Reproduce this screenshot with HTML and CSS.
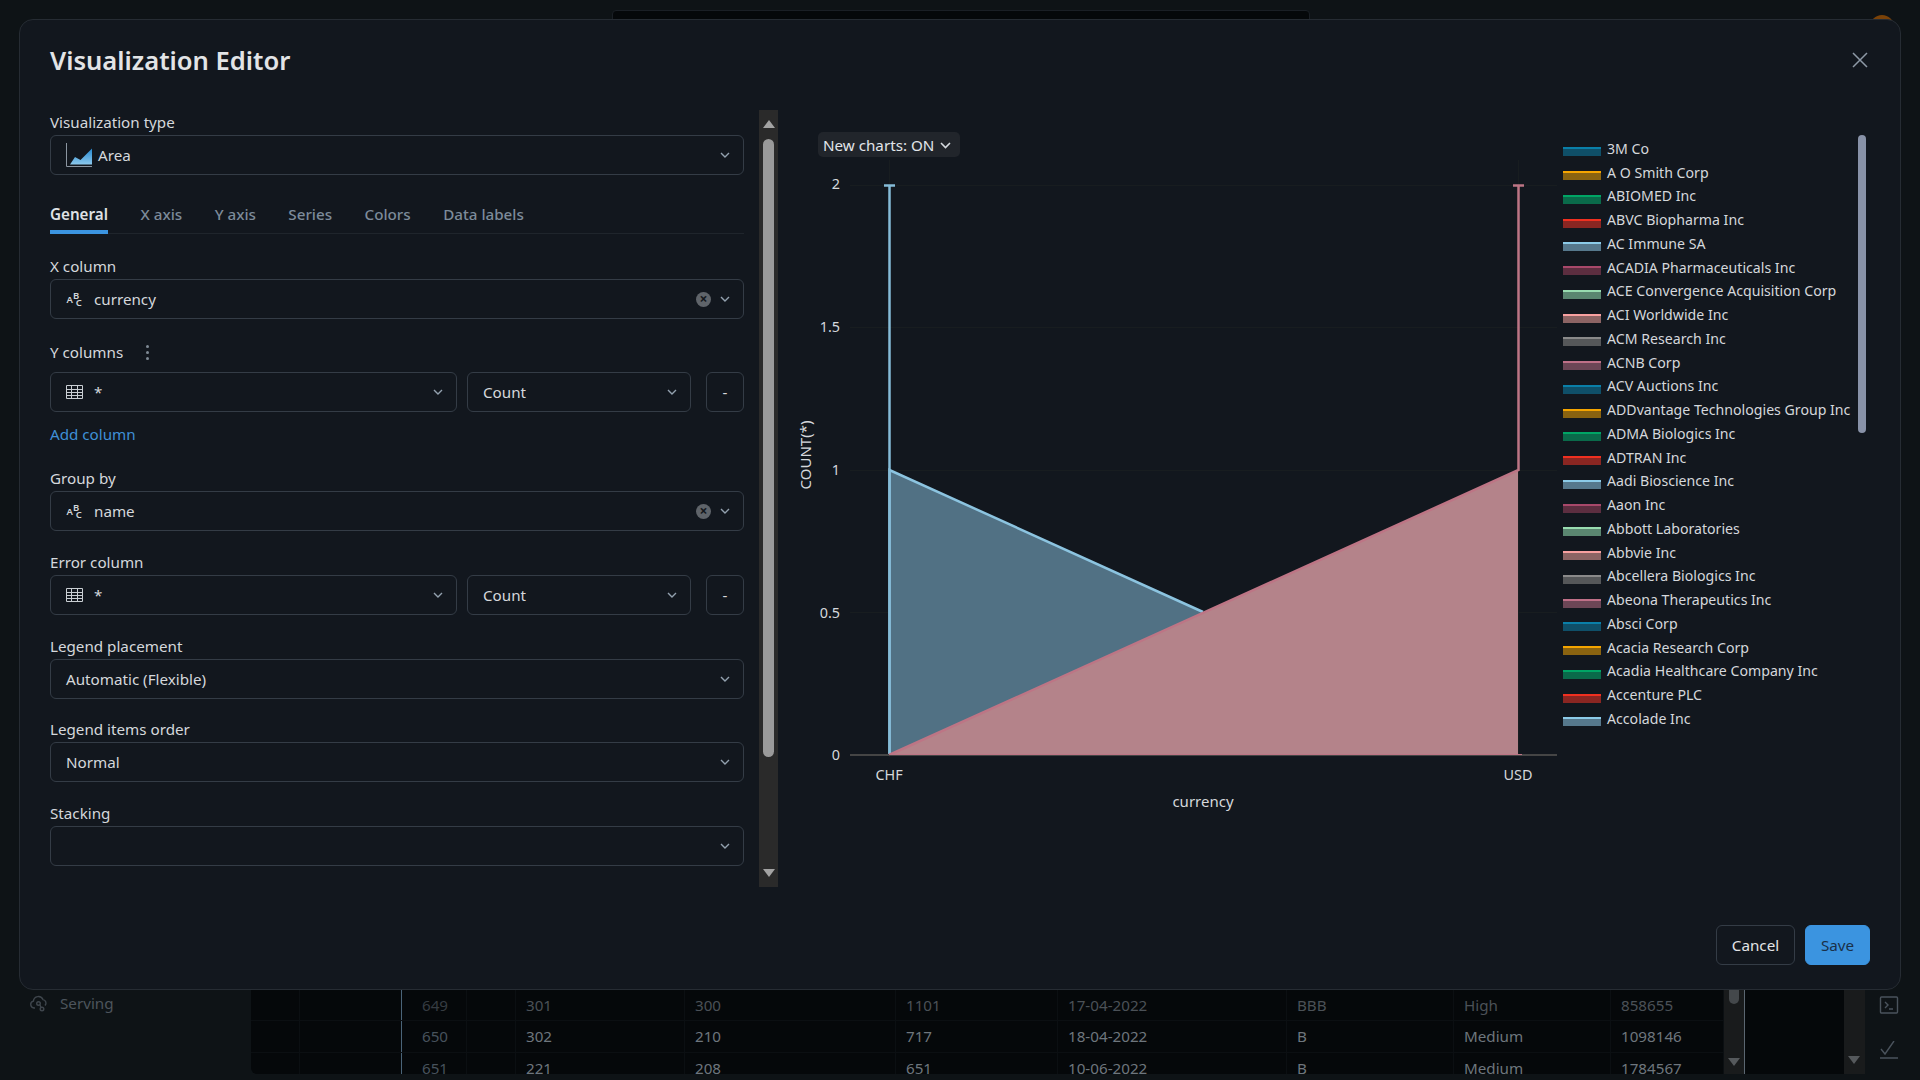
FILE: index.html
```html
<!DOCTYPE html>
<html>
<head>
<title>Visualization Editor</title>
<link rel="stylesheet" href="styles.css">
</head>
<body>

<div class="page">
  <div class="topbar">
    <div class="search-box"></div>
    <div class="avatar"></div>
  </div>
  <div class="main">
    <div class="sidebar">
      <div class="side-item">
        <svg class="side-icon" width="20" height="20" viewBox="0 0 20 20" fill="none" stroke="#3f464d" stroke-width="1.4">
          <path d="M6 15H5a3.5 3.5 0 0 1-.6-6.9A5 5 0 0 1 14 6.6a3.5 3.5 0 0 1 2 5.9"/>
          <circle cx="9.5" cy="10.5" r="1.8"/>
          <circle cx="13" cy="16" r="1.8"/>
          <path d="M11 12l1 2.4"/>
        </svg>
        <span>Serving</span>
      </div>
    </div>
    <div class="table-wrap">
      <div class="data-table">
        <div class="row row-dim">
          <div></div><div class="divided"></div><div class="idx">649</div><div></div><div>301</div><div>300</div><div>1101</div><div>17-04-2022</div><div>BBB</div><div>High</div><div>858655</div>
        </div>
        <div class="row">
          <div></div><div class="divided"></div><div class="idx">650</div><div></div><div>302</div><div>210</div><div>717</div><div>18-04-2022</div><div>B</div><div>Medium</div><div>1098146</div>
        </div>
        <div class="row">
          <div></div><div class="divided"></div><div class="idx">651</div><div></div><div>221</div><div>208</div><div>651</div><div>10-06-2022</div><div>B</div><div>Medium</div><div>1784567</div>
        </div>
      </div>
      <div class="bg-scroll">
        <div class="bg-thumb"></div>
        <div class="arrow-down dim"></div>
      </div>
      <div class="bg-gap"></div>
      <div class="bg-scroll outer">
        <div class="arrow-down dim"></div>
      </div>
    </div>
    <div class="side-tools">
      <svg width="20" height="18" viewBox="0 0 20 18" fill="none" stroke="#4a535c" stroke-width="1.4">
        <rect x="1.500" y="1" width="17" height="16" rx="1"/>
        <path d="M6 6l3 3-3 3M10 13h4"/>
      </svg>
      <svg width="20" height="18" viewBox="0 0 20 18" fill="none" stroke="#4a535c" stroke-width="1.4">
        <path d="M2 8l4 5L15 0M1 17h18"/>
      </svg>
    </div>
  </div>
</div>

<div class="modal">
  <div class="modal-header">
    <h1>Visualization Editor</h1>
    <svg class="close-icon" width="16" height="16" viewBox="0 0 16 16" fill="none" stroke="#8d99a6" stroke-width="1.5">
      <path d="M1 1l14 14M15 1L1 15"/>
    </svg>
  </div>

  <div class="modal-body">
    <div class="form-pane">
      <label>Visualization type</label>
      <div class="select">
        <svg class="area-icon" width="27" height="24" viewBox="0 0 27 24">
          <defs>
            <linearGradient id="areaFill" x1="0" y1="0" x2="0" y2="1">
              <stop offset="0" stop-color="#2488d0"/>
              <stop offset="1" stop-color="#8cc8ec"/>
            </linearGradient>
          </defs>
          <path d="M4 21.500l5-7.500 5.500 3L26 5.500v16z" fill="url(#areaFill)"/>
          <path d="M.5 0v23.500H26" fill="none" stroke="#8b95a0"/>
        </svg>
        <span class="value">Area</span>
        <svg class="chev" width="10" height="6" viewBox="0 0 10 6"><path d="M1 1l4 4 4-4" fill="none" stroke="#93a1af" stroke-width="1.4"/></svg>
      </div>

      <div class="tabs">
        <span class="tab active">General</span>
        <span class="tab">X axis</span>
        <span class="tab">Y axis</span>
        <span class="tab">Series</span>
        <span class="tab">Colors</span>
        <span class="tab">Data labels</span>
      </div>

      <label class="after-tabs">X column</label>
      <div class="select">
        <svg class="type-icon" width="18" height="18" viewBox="0 0 18 18" fill="#d2d6da" font-family="Noto Sans" font-size="9.5" font-weight="600"><text x="0.500" y="13">A<tspan dx="0" dy="-4">B</tspan><tspan dx="-3.500" dy="7">C</tspan></text></svg>
        <span class="value">currency</span>
        <span class="clear">&times;</span>
        <svg class="chev" width="10" height="6" viewBox="0 0 10 6"><path d="M1 1l4 4 4-4" fill="none" stroke="#93a1af" stroke-width="1.4"/></svg>
      </div>

      <div class="label-row">
        <span>Y columns</span>
        <span class="kebab"><i></i><i></i><i></i></span>
      </div>
      <div class="select-row">
        <div class="select grow">
          <svg class="type-icon" width="18" height="18" viewBox="0 0 18 18" fill="none" stroke="#c9ced3"><path d="M.5 2.500h16v13H.5zM.5 6.500h16M.5 9.500h16M.5 12.500h16M5.500 2.500v13M11.500 2.500v13"/></svg>
          <span class="value">*</span>
          <svg class="chev" width="10" height="6" viewBox="0 0 10 6"><path d="M1 1l4 4 4-4" fill="none" stroke="#93a1af" stroke-width="1.4"/></svg>
        </div>
        <div class="select agg">
          <span class="value">Count</span>
          <svg class="chev" width="10" height="6" viewBox="0 0 10 6"><path d="M1 1l4 4 4-4" fill="none" stroke="#93a1af" stroke-width="1.4"/></svg>
        </div>
        <div class="minus">-</div>
      </div>
      <a class="add-link">Add column</a>

      <label class="spaced">Group by</label>
      <div class="select">
        <svg class="type-icon" width="18" height="18" viewBox="0 0 18 18" fill="#d2d6da" font-family="Noto Sans" font-size="9.5" font-weight="600"><text x="0.500" y="13">A<tspan dx="0" dy="-4">B</tspan><tspan dx="-3.500" dy="7">C</tspan></text></svg>
        <span class="value">name</span>
        <span class="clear">&times;</span>
        <svg class="chev" width="10" height="6" viewBox="0 0 10 6"><path d="M1 1l4 4 4-4" fill="none" stroke="#93a1af" stroke-width="1.4"/></svg>
      </div>

      <label class="spaced">Error column</label>
      <div class="select-row">
        <div class="select grow">
          <svg class="type-icon" width="18" height="18" viewBox="0 0 18 18" fill="none" stroke="#c9ced3"><path d="M.5 2.500h16v13H.5zM.5 6.500h16M.5 9.500h16M.5 12.500h16M5.500 2.500v13M11.500 2.500v13"/></svg>
          <span class="value">*</span>
          <svg class="chev" width="10" height="6" viewBox="0 0 10 6"><path d="M1 1l4 4 4-4" fill="none" stroke="#93a1af" stroke-width="1.4"/></svg>
        </div>
        <div class="select agg">
          <span class="value">Count</span>
          <svg class="chev" width="10" height="6" viewBox="0 0 10 6"><path d="M1 1l4 4 4-4" fill="none" stroke="#93a1af" stroke-width="1.4"/></svg>
        </div>
        <div class="minus">-</div>
      </div>

      <label class="spaced">Legend placement</label>
      <div class="select">
        <span class="value">Automatic (Flexible)</span>
        <svg class="chev" width="10" height="6" viewBox="0 0 10 6"><path d="M1 1l4 4 4-4" fill="none" stroke="#93a1af" stroke-width="1.4"/></svg>
      </div>

      <label class="spaced tight">Legend items order</label>
      <div class="select">
        <span class="value">Normal</span>
        <svg class="chev" width="10" height="6" viewBox="0 0 10 6"><path d="M1 1l4 4 4-4" fill="none" stroke="#93a1af" stroke-width="1.4"/></svg>
      </div>

      <label class="spaced">Stacking</label>
      <div class="select">
        <span class="value"></span>
        <svg class="chev" width="10" height="6" viewBox="0 0 10 6"><path d="M1 1l4 4 4-4" fill="none" stroke="#93a1af" stroke-width="1.4"/></svg>
      </div>
    </div>

    <div class="form-scroll">
      <div class="arrow-up"></div>
      <div class="form-thumb"></div>
      <div class="arrow-down"></div>
    </div>

    <div class="chart-pane">
      <div class="chart-col">
        <div class="charts-btn">New charts: ON
          <svg width="11" height="7" viewBox="0 0 11 7"><path d="M1 1l4.500 4.500L10 1" fill="none" stroke="#d5dadf" stroke-width="1.6"/></svg>
        </div>
        <svg class="plot" width="770" height="670" viewBox="790 160 770 670">
          <g stroke="#181d20" stroke-width="1">
            <path d="M850 185.500H1557M850 327.500H1557M850 470.500H1557M850 612.500H1557"/>
            <path d="M889.500 160V755M1518.500 160V755"/>
          </g>
          <path d="M889.500 755V470L1518 755z" fill="#517184"/>
          <path d="M889.500 755V470L1203 612" fill="none" stroke="#8cc4e0" stroke-width="2.500"/>
          <path d="M889.500 755V185M884 185.500h11" fill="none" stroke="#85bcd8" stroke-width="2.500"/>
          <path d="M889 755L1518 470V755z" fill="#b4838a"/>
          <path d="M889 755L1518.500 470V185.500M1513 185.500h11" fill="none" stroke="#bd7585" stroke-width="2.500"/>
          <path d="M850 755H1557" stroke="#454545" stroke-width="2"/>
          <path d="M889 754.500H1522" stroke="#bd7585" stroke-width="1"/>
          <g class="tick" text-anchor="end">
            <text x="840" y="189">2</text>
            <text x="840" y="332">1.5</text>
            <text x="840" y="475">1</text>
            <text x="840" y="618">0.5</text>
            <text x="840" y="760">0</text>
          </g>
          <g class="tick" text-anchor="middle">
            <text x="889" y="780">CHF</text>
            <text x="1518" y="780">USD</text>
            <text class="axis-title" x="1203" y="807">currency</text>
            <text class="axis-title" transform="translate(811 455) rotate(-90)">COUNT(*)</text>
          </g>
        </svg>
      </div>
      <div class="legend">
        <div class="legend-list">
          <div class="item"><i class="sw c0"></i>3M Co</div>
          <div class="item"><i class="sw c1"></i>A O Smith Corp</div>
          <div class="item"><i class="sw c2"></i>ABIOMED Inc</div>
          <div class="item"><i class="sw c3"></i>ABVC Biopharma Inc</div>
          <div class="item"><i class="sw c4"></i>AC Immune SA</div>
          <div class="item"><i class="sw c5"></i>ACADIA Pharmaceuticals Inc</div>
          <div class="item"><i class="sw c6"></i>ACE Convergence Acquisition Corp</div>
          <div class="item"><i class="sw c7"></i>ACI Worldwide Inc</div>
          <div class="item"><i class="sw c8"></i>ACM Research Inc</div>
          <div class="item"><i class="sw c9"></i>ACNB Corp</div>
          <div class="item"><i class="sw c0"></i>ACV Auctions Inc</div>
          <div class="item"><i class="sw c1"></i>ADDvantage Technologies Group Inc</div>
          <div class="item"><i class="sw c2"></i>ADMA Biologics Inc</div>
          <div class="item"><i class="sw c3"></i>ADTRAN Inc</div>
          <div class="item"><i class="sw c4"></i>Aadi Bioscience Inc</div>
          <div class="item"><i class="sw c5"></i>Aaon Inc</div>
          <div class="item"><i class="sw c6"></i>Abbott Laboratories</div>
          <div class="item"><i class="sw c7"></i>Abbvie Inc</div>
          <div class="item"><i class="sw c8"></i>Abcellera Biologics Inc</div>
          <div class="item"><i class="sw c9"></i>Abeona Therapeutics Inc</div>
          <div class="item"><i class="sw c0"></i>Absci Corp</div>
          <div class="item"><i class="sw c1"></i>Acacia Research Corp</div>
          <div class="item"><i class="sw c2"></i>Acadia Healthcare Company Inc</div>
          <div class="item"><i class="sw c3"></i>Accenture PLC</div>
          <div class="item"><i class="sw c4"></i>Accolade Inc</div>
        </div>
        <div class="legend-thumb"></div>
      </div>
    </div>
  </div>

  <div class="modal-footer">
    <button class="btn">Cancel</button>
    <button class="btn primary">Save</button>
  </div>
</div>

</body>
</html>
```

FILE: styles.css
```css
* {
  box-sizing: border-box;
}

body {
  margin: 0;
  background-color: #0e1316;
  font-family: "Noto Sans", "Open Sans", sans-serif;
  font-size: 15.2px;
  color: #d5d8dc;
  overflow: hidden;
}

/* page behind the dialog */
.page {
  width: 1920px;
  height: 1080px;
  display: flex;
  flex-direction: column;
  overflow: hidden;
}

.topbar {
  height: 990px;
  padding-top: 10px;
  position: relative;
}

.search-box {
  width: 698px;
  height: 30px;
  margin-left: 612px;
  background-color: #05080a;
  border: 1px solid #1a1f25;
  border-radius: 4px;
}

.avatar {
  position: absolute;
  left: 1870px;
  top: 15px;
  width: 24px;
  height: 24px;
  border-radius: 50%;
  background-color: #7a4208;
}

.main {
  flex: 1;
  display: flex;
}

.sidebar {
  width: 251px;
  padding: 3px 0 0 29px;
}

.side-item {
  display: flex;
  align-items: center;
  gap: 11px;
  color: #4d555c;
}

.table-wrap {
  width: 1614px;
  height: 84px;
  display: flex;
  background-color: #05080a;
  border-bottom-left-radius: 6px;
  overflow: hidden;
}

.data-table {
  width: 1473px;
}

.row {
  height: 31.4px;
  display: grid;
  grid-template-columns: 49px 102px 65px 49px 169px 211px 162px 229px 167px 157px 113px;
  border-bottom: 1px solid #0b0f12;
  color: #6e767d;
  line-height: 30px;
}

.row > div {
  padding-left: 10px;
  border-right: 1px solid #0b0f12;
}

.row .divided {
  border-right: 1px solid #4a6478;
}

.row .idx {
  padding-left: 20px;
  color: #47525c;
}

.row-dim {
  color: #4b5157;
}

.row-dim .idx {
  color: #363c42;
}

.bg-scroll {
  width: 20px;
  background-color: #191b1c;
  padding: 0 5px;
  position: relative;
}

.bg-scroll.outer {
  width: 21px;
}

.bg-thumb {
  height: 17px;
  margin-top: -3px;
  background-color: #44484b;
  border-radius: 0 0 5px 5px;
}

.bg-scroll .arrow-down {
  position: absolute;
  left: 4px;
  top: 68px;
}

.bg-scroll.outer .arrow-down {
  top: 66px;
}

.bg-gap {
  width: 100px;
  border-left: 1px solid #5b6670;
}

.arrow-down.dim {
  border-top-color: #55595c;
}

.side-tools {
  flex: 1;
  display: flex;
  flex-direction: column;
  gap: 27px;
  padding: 6px 0 0 14px;
}

/* dialog */
.modal {
  position: absolute;
  left: 19px;
  top: 19px;
  width: 1882px;
  height: 971px;
  background-color: #12171e;
  border: 1px solid #262c33;
  border-radius: 14px;
}

.modal-header {
  height: 90px;
  padding: 25px 32px 0 30px;
  display: flex;
  justify-content: space-between;
}

.modal-header h1 {
  margin: 0;
  font-size: 25.6px;
  line-height: 32px;
  font-weight: 600;
  color: #e2e4e6;
}

.close-icon {
  margin-top: 7px;
}

.modal-body {
  height: 777px;
  display: flex;
  padding-left: 30px;
}

.form-pane {
  width: 694px;
  padding-top: 3px;
}

label {
  display: block;
  line-height: 19px;
  padding-bottom: 3px;
  color: #d5d8dc;
}

label.spaced {
  margin-top: 22px;
}

label.tight {
  margin-top: 21px;
}

label.after-tabs {
  margin-top: 23px;
}

.label-row {
  margin-top: 19px;
  height: 34px;
  padding-top: 4px;
  display: flex;
  gap: 23px;
  align-items: flex-start;
  line-height: 21px;
  color: #d5d8dc;
}

.kebab {
  display: flex;
  flex-direction: column;
  gap: 3px;
  padding-top: 3px;
}

.kebab i {
  width: 3px;
  height: 3px;
  background-color: #7f8a95;
  border-radius: 50%;
}

.select {
  height: 40px;
  display: flex;
  align-items: center;
  padding: 0 13px 0 15px;
  border: 1px solid #343c46;
  border-radius: 6px;
  background-color: #12171e;
}

.select .value {
  flex: 1;
  color: #d5d8dc;
}

.area-icon {
  margin-right: 5px;
}

.type-icon {
  margin-right: 10px;
}

.chev {
  flex: none;
}

.clear {
  width: 15px;
  height: 15px;
  margin-right: 9px;
  border-radius: 50%;
  background-color: #5f646a;
  color: #14181d;
  font-size: 14px;
  font-weight: 700;
  line-height: 14px;
  text-align: center;
}

.select-row {
  display: flex;
}

.select.grow {
  width: 407px;
}

.select.agg {
  width: 224px;
  margin-left: 10px;
}

.minus {
  width: 38px;
  height: 40px;
  margin-left: 15px;
  border: 1px solid #343c46;
  border-radius: 6px;
  text-align: center;
  line-height: 38px;
}

.add-link {
  display: block;
  margin-top: 12px;
  padding-bottom: 2px;
  line-height: 21px;
  color: #3f8fd6;
}

.tabs {
  margin-top: 21px;
  height: 38px;
  display: flex;
  gap: 32.5px;
  border-bottom: 1px solid #1f252c;
}

.tab {
  height: 38px;
  padding-top: 7px;
  line-height: 22px;
  color: #7d8b9a;
  font-weight: 500;
}

.tab.active {
  color: #dfe2e5;
  font-weight: 600;
  border-bottom: 4px solid #3b94e0;
}

.form-scroll {
  width: 19px;
  margin-left: 15px;
  background-color: #2a2a2a;
  display: flex;
  flex-direction: column;
  align-items: center;
  padding-top: 10px;
}

.arrow-up,
.arrow-down {
  width: 0;
  height: 0;
  border-left: 6px solid transparent;
  border-right: 6px solid transparent;
}

.arrow-up {
  border-bottom: 8px solid #a3a3a3;
}

.arrow-down {
  border-top: 8px solid #a3a3a3;
}

.form-thumb {
  width: 11px;
  height: 618px;
  margin: 11px 0 112px;
  background-color: #9a9a9a;
  border-radius: 6px;
}

.chart-pane {
  flex: 1;
  display: flex;
  margin-left: 12px;
}

.chart-col {
  width: 770px;
}

.charts-btn {
  width: 142px;
  height: 25px;
  margin: 22px 0 3px 28px;
  padding: 1px 0 0 5px;
  display: flex;
  align-items: center;
  gap: 6px;
  background-color: #21252b;
  border-radius: 5px;
  color: #e2e6ea;
}

.plot {
  display: block;
}

.tick text {
  fill: #d5d8dc;
  font-size: 14.4px;
}

.tick .axis-title {
  font-size: 15px;
}

.legend {
  display: flex;
  margin-left: 3px;
}

.legend-list {
  width: 295px;
  padding-top: 26.6px;
}

.item {
  height: 23.75px;
  display: flex;
  align-items: center;
  gap: 6px;
  white-space: nowrap;
  font-size: 14.15px;
  color: #d5d8dc;
}

.sw {
  flex: none;
  width: 38px;
  height: 9px;
  margin-top: 7px;
  border-top: 2px solid;
}

.c0 { border-color: #0a7fa8; background-color: #0f4f68; }
.c1 { border-color: #f5a500; background-color: #8a6310; }
.c2 { border-color: #00a565; background-color: #0a6a4a; }
.c3 { border-color: #f03020; background-color: #8a2622; }
.c4 { border-color: #8ccbe8; background-color: #56788c; }
.c5 { border-color: #a8486a; background-color: #5c2e40; }
.c6 { border-color: #98dcb0; background-color: #5a8670; }
.c7 { border-color: #f8a0a0; background-color: #8c6464; }
.c8 { border-color: #8a8a8a; background-color: #555759; }
.c9 { border-color: #bf7088; background-color: #6c4656; }

.legend-thumb {
  width: 8px;
  height: 298px;
  margin-top: 25px;
  background-color: #8892a8;
  border-radius: 4px;
}

.modal-footer {
  margin-top: 38px;
  padding-right: 30px;
  display: flex;
  justify-content: flex-end;
  gap: 10px;
}

.btn {
  height: 40px;
  width: 79px;
  font-family: "Noto Sans", "Open Sans", sans-serif;
  font-size: 15.2px;
  color: #e2e4e6;
  background-color: #12171e;
  border: 1px solid #343c46;
  border-radius: 6px;
  cursor: pointer;
}

.btn.primary {
  width: 65px;
  background-color: #3b94e0;
  border-color: #3b94e0;
  color: #1a3048;
}
```
